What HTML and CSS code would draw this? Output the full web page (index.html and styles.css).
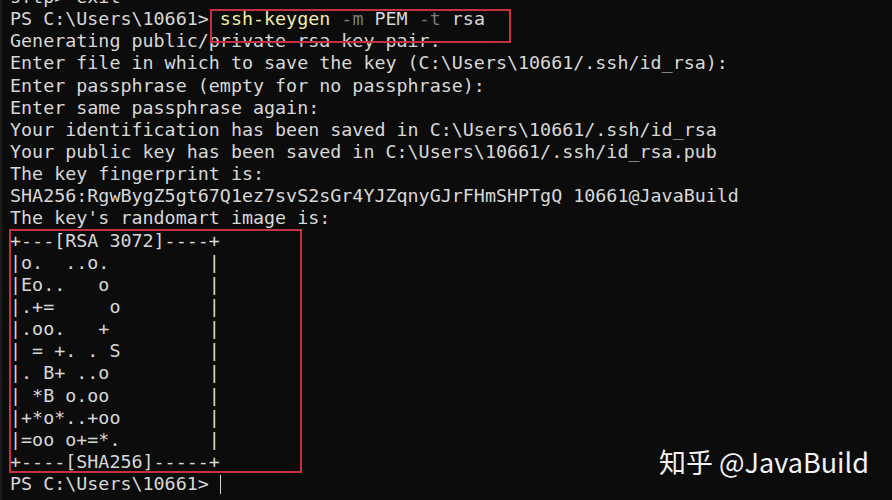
FILE: index.html
```html
<!DOCTYPE html>
<html>
<head>
<meta charset="utf-8">
<link rel="stylesheet" href="styles.css">
</head>
<body>
<div class="term">
<pre class="out">sftp&gt; exit
PS C:\Users\10661&gt; <span class="cmd">ssh-keygen</span> <span class="par">-m</span> PEM <span class="par">-t</span> rsa
Generating public/private rsa key pair.
Enter file in which to save the key (C:\Users\10661/.ssh/id_rsa):
Enter passphrase (empty for no passphrase):
Enter same passphrase again:
Your identification has been saved in C:\Users\10661/.ssh/id_rsa
Your public key has been saved in C:\Users\10661/.ssh/id_rsa.pub
The key fingerprint is:
SHA256:RgwBygZ5gt67Q1ez7svS2sGr4YJZqnyGJrFHmSHPTgQ 10661@JavaBuild
The key's randomart image is:
+---[RSA 3072]----+
|o.  ..o.         |
|Eo..   o         |
|.+=     o        |
|.oo.   +         |
| = +. . S        |
|. B+ ..o         |
| *B o.oo         |
|+*o*..+oo        |
|=oo o+=*.        |
+----[SHA256]-----+
PS C:\Users\10661&gt; <span class="cursor"></span></pre>
<div class="hl hl-cmd"></div>
<div class="hl hl-art"></div>
<div class="mark">知乎 @JavaBuild</div>
</div>
</body>
</html>
```
FILE: styles.css
```css
html, body {
  margin: 0;
  padding: 0;
  background: #0c0c0c;
}
.term {
  position: relative;
  width: 892px;
  height: 500px;
  overflow: hidden;
  background: #0c0c0c;
  border-left: 2px solid #1b1b1b;
  box-sizing: border-box;
}
.out {
  margin: -14px 0 0 8px;
  font-family: "DejaVu Sans Mono", "Liberation Mono", monospace;
  font-size: 18.35px;
  line-height: 22.14px;
  color: #d8d8d8;
  white-space: pre;
}
.cmd { color: #f4eda6; }
.par { color: #7a7a7a; }
.cursor {
  display: inline-block;
  width: 0;
  height: 19px;
  border-left: 1px solid #d6d6d6;
  vertical-align: -4px;
}
.hl {
  position: absolute;
  border: 2px solid #c8303f;
  box-sizing: border-box;
}
.hl-cmd {
  left: 208px;
  top: 9px;
  width: 301px;
  height: 34px;
}
.hl-art {
  left: 7px;
  top: 229px;
  width: 293px;
  height: 244px;
}
.mark {
  position: absolute;
  left: 657px;
  top: 443px;
  font-family: "Noto Sans CJK SC", "Noto Sans", sans-serif;
  font-size: 27px;
  line-height: 38px;
  color: #f2f2f2;
  white-space: nowrap;
}
```
